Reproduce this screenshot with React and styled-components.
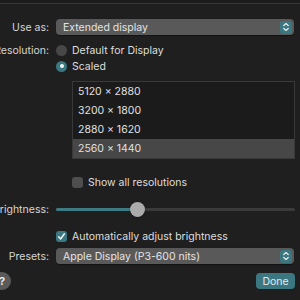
import React from "react";
import styled, { createGlobalStyle } from "styled-components";

const Global = createGlobalStyle`
  html, body { margin: 0; padding: 0; background: #1f1f1f; }
  body { width: 300px; height: 300px; overflow: hidden; font-family: Inter, "Noto Sans", sans-serif; }
  #root { width: 300px; height: 300px; overflow: hidden; }
`;

const Window = styled.div`
  width: 300px;
  height: 300px;
  overflow: hidden;
  background: #1f1f1f;
  color: #dedede;
  font-size: 10.5px;
`;

const TopRule = styled.div`
  height: 3px;
  border-bottom: 1px solid #363636;
  background: #1c1c1c;
`;

const Sheet = styled.div`
  width: 335px;
  margin-left: -35px;
  padding: 15px 5px 0 28px;
  box-sizing: border-box;
  display: flex;
  flex-direction: column;
`;

const Row = styled.div`
  display: grid;
  grid-template-columns: 56px 1fr;
  column-gap: 7px;
  align-items: center;
  height: ${(p) => p.$h || 16}px;
  margin-top: ${(p) => p.$mt || 0}px;
`;

const Label = styled.div`
  display: flex;
  justify-content: flex-end;
  white-space: nowrap;
  color: #d6d6d6;
`;

const Popup = styled.div`
  height: 16px;
  margin-right: 1px;
  border-radius: 4px;
  background: #595959;
  display: flex;
  align-items: center;
  justify-content: space-between;
  padding: 0 2px 0 7px;
  color: #e4e4e4;
  box-shadow: 0 0.5px 1px rgba(0,0,0,0.4);
`;

const Stepper = styled.div`
  width: 12px;
  height: 13px;
  border-radius: 3px;
  background: #3b7780;
  display: flex;
  align-items: center;
  justify-content: center;
`;

const Option = styled.div`
  display: flex;
  align-items: center;
  gap: 5px;
  white-space: nowrap;
  padding-left: ${(p) => p.$indent || 0}px;
`;

const Radio = styled.span`
  width: 11px;
  height: 11px;
  border-radius: 50%;
  background: ${(p) => (p.$on ? "#3c7882" : "#474747")};
  display: flex;
  align-items: center;
  justify-content: center;
  flex: none;
  &::after {
    content: "";
    width: 4px;
    height: 4px;
    border-radius: 50%;
    background: #f2f2f2;
    display: ${(p) => (p.$on ? "block" : "none")};
  }
`;

const Check = styled.span`
  width: 11px;
  height: 11px;
  border-radius: 3px;
  background: ${(p) => (p.$on ? "#3c7882" : "#4e4e4e")};
  display: flex;
  align-items: center;
  justify-content: center;
  flex: none;
`;

const List = styled.div`
  margin-left: 16px;
  border: 1px solid #393939;
  background: #1b1b1b;
  display: flex;
  flex-direction: column;
`;

const ListRow = styled.div`
  height: 19px;
  display: flex;
  align-items: center;
  padding-left: 5px;
  background: ${(p) => (p.$sel ? "#474747" : "transparent")};
  color: #e0e0e0;
`;

const ListWrap = styled.div`
  margin-top: 7px;
  display: grid;
  grid-template-columns: 56px 1fr;
  column-gap: 7px;
`;

const Track = styled.div`
  position: relative;
  height: 3px;
  border-radius: 2px;
  background: #3a3a3a;
  margin-right: 0;
`;

const Fill = styled.div`
  height: 100%;
  border-radius: 2px;
  background: #3d7a83;
`;

const Thumb = styled.div`
  position: absolute;
  top: 50%;
  width: 15px;
  height: 15px;
  margin-left: -7.5px;
  margin-top: -7.5px;
  border-radius: 50%;
  background: #ababab;
  box-shadow: 0 0.5px 1.5px rgba(0,0,0,0.5);
`;

const Footer = styled.div`
  margin-top: 8px;
  display: flex;
  align-items: center;
  justify-content: space-between;
`;

const Help = styled.div`
  width: 18px;
  height: 18px;
  border-radius: 50%;
  background: #5a5a5a;
  color: #eaeaea;
  font-weight: 700;
  font-size: 11px;
  display: flex;
  align-items: center;
  justify-content: center;
`;

const Button = styled.div`
  width: 39px;
  height: 16px;
  border-radius: 4px;
  background: #3b7780;
  color: #e8e8e8;
  display: flex;
  align-items: center;
  justify-content: center;
  margin-right: 0;
`;

const Chevrons = () => (
  <svg width="8" height="10" viewBox="0 0 8 10" fill="none" stroke="#e8e8e8" strokeWidth="1.3" strokeLinecap="round" strokeLinejoin="round">
    <path d="M1.8 3.6 L4 1.6 L6.2 3.6" />
    <path d="M1.8 6.4 L4 8.4 L6.2 6.4" />
  </svg>
);

const Tick = () => (
  <svg width="9" height="9" viewBox="0 0 9 9" fill="none" stroke="#f2f2f2" strokeWidth="1.5" strokeLinecap="round" strokeLinejoin="round">
    <path d="M1.6 4.8 L3.6 7 L7.4 1.8" />
  </svg>
);

const resolutions = ["5120 × 2880", "3200 × 1800", "2880 × 1620", "2560 × 1440"];

export default function App() {
  const brightness = 0.34;
  return (
    <Window>
      <Global />
      <TopRule />
      <Sheet>
        <Row>
          <Label>Use as:</Label>
          <Popup>
            <span>Extended display</span>
            <Stepper><Chevrons /></Stepper>
          </Popup>
        </Row>
        <Row $mt={7}>
          <Label>Resolution:</Label>
          <Option><Radio />Default for Display</Option>
        </Row>
        <Row>
          <Label />
          <Option><Radio $on />Scaled</Option>
        </Row>
        <ListWrap>
          <div />
          <List>
            {resolutions.map((r, i) => (
              <ListRow key={r} $sel={i === 3}>{r}</ListRow>
            ))}
          </List>
        </ListWrap>
        <Row $mt={15}>
          <Label />
          <Option $indent={16}><Check />Show all resolutions</Option>
        </Row>
        <Row $mt={11}>
          <Label>Brightness:</Label>
          <Track>
            <Fill style={{ width: `${brightness * 100}%` }} />
            <Thumb style={{ left: `${brightness * 100}%` }} />
          </Track>
        </Row>
        <Row $mt={11}>
          <Label />
          <Option><Check $on><Tick /></Check>Automatically adjust brightness</Option>
        </Row>
        <Row $mt={4}>
          <Label>Presets:</Label>
          <Popup>
            <span>Apple Display (P3-600 nits)</span>
            <Stepper><Chevrons /></Stepper>
          </Popup>
        </Row>
        <Footer>
          <Help>?</Help>
          <Button>Done</Button>
        </Footer>
      </Sheet>
    </Window>
  );
}
